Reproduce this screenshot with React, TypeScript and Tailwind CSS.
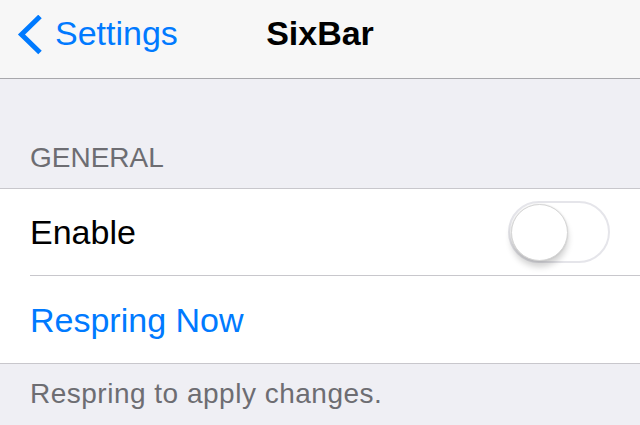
import React from 'react';

const font = { fontFamily: '"Liberation Sans", Arial, sans-serif' };

function Toggle() {
  return (
    <div className="relative w-[102px] h-[62px] rounded-full border-2 border-[#e5e5ea] bg-white">
      <div className="absolute left-[1px] top-[1px] w-[57px] h-[57px] rounded-full bg-white border border-[#d6d6d6] shadow-[0_6px_6px_rgba(0,0,0,0.18),0_0_2px_rgba(0,0,0,0.12)]" />
    </div>
  );
}

export default function App() {
  return (
    <div className="w-[640px] h-[425px] overflow-hidden bg-[#efeff4] flex flex-col" style={font}>
      {/* nav bar */}
      <div className="relative h-[79px] shrink-0 bg-[#f7f7f7] border-b border-[#a8a8ac] flex items-start pt-[16px]">
        <div className="flex items-start pl-[17px]">
          <svg width="26" height="40" viewBox="0 0 26 40" className="mt-[-1px]">
            <path d="M23 1.5 L4.5 19.5 L23 37.5" fill="none" stroke="#007aff" strokeWidth="5" strokeLinecap="butt" />
          </svg>
          <span className="ml-[12px] text-[34px] leading-[34px] text-[#007aff]">Settings</span>
        </div>
        <div className="absolute left-0 right-0 top-[16px] text-center text-[34px] leading-[34px] font-bold text-black">
          SixBar
        </div>
      </div>

      {/* section header */}
      <div className="pt-[65px] pb-[16px] pl-[30px] text-[28px] leading-[28px] text-[#6d6d72]">GENERAL</div>

      {/* group */}
      <div className="bg-white border-y border-[#c8c7cc]">
        <div className="h-[86px] flex items-center justify-between pl-[30px] pr-[30px]">
          <span className="text-[34px] leading-[34px] text-black">Enable</span>
          <Toggle />
        </div>
        <div className="ml-[30px] h-px bg-[#c8c7cc]" />
        <div className="h-[87px] flex items-center pl-[30px]">
          <span className="text-[34px] leading-[34px] text-[#007aff]">Respring Now</span>
        </div>
      </div>

      {/* footer */}
      <div className="pt-[16px] pl-[30px] text-[28px] leading-[28px] tracking-[0.5px] text-[#6d6d72]">Respring to apply changes.</div>
    </div>
  );
}
